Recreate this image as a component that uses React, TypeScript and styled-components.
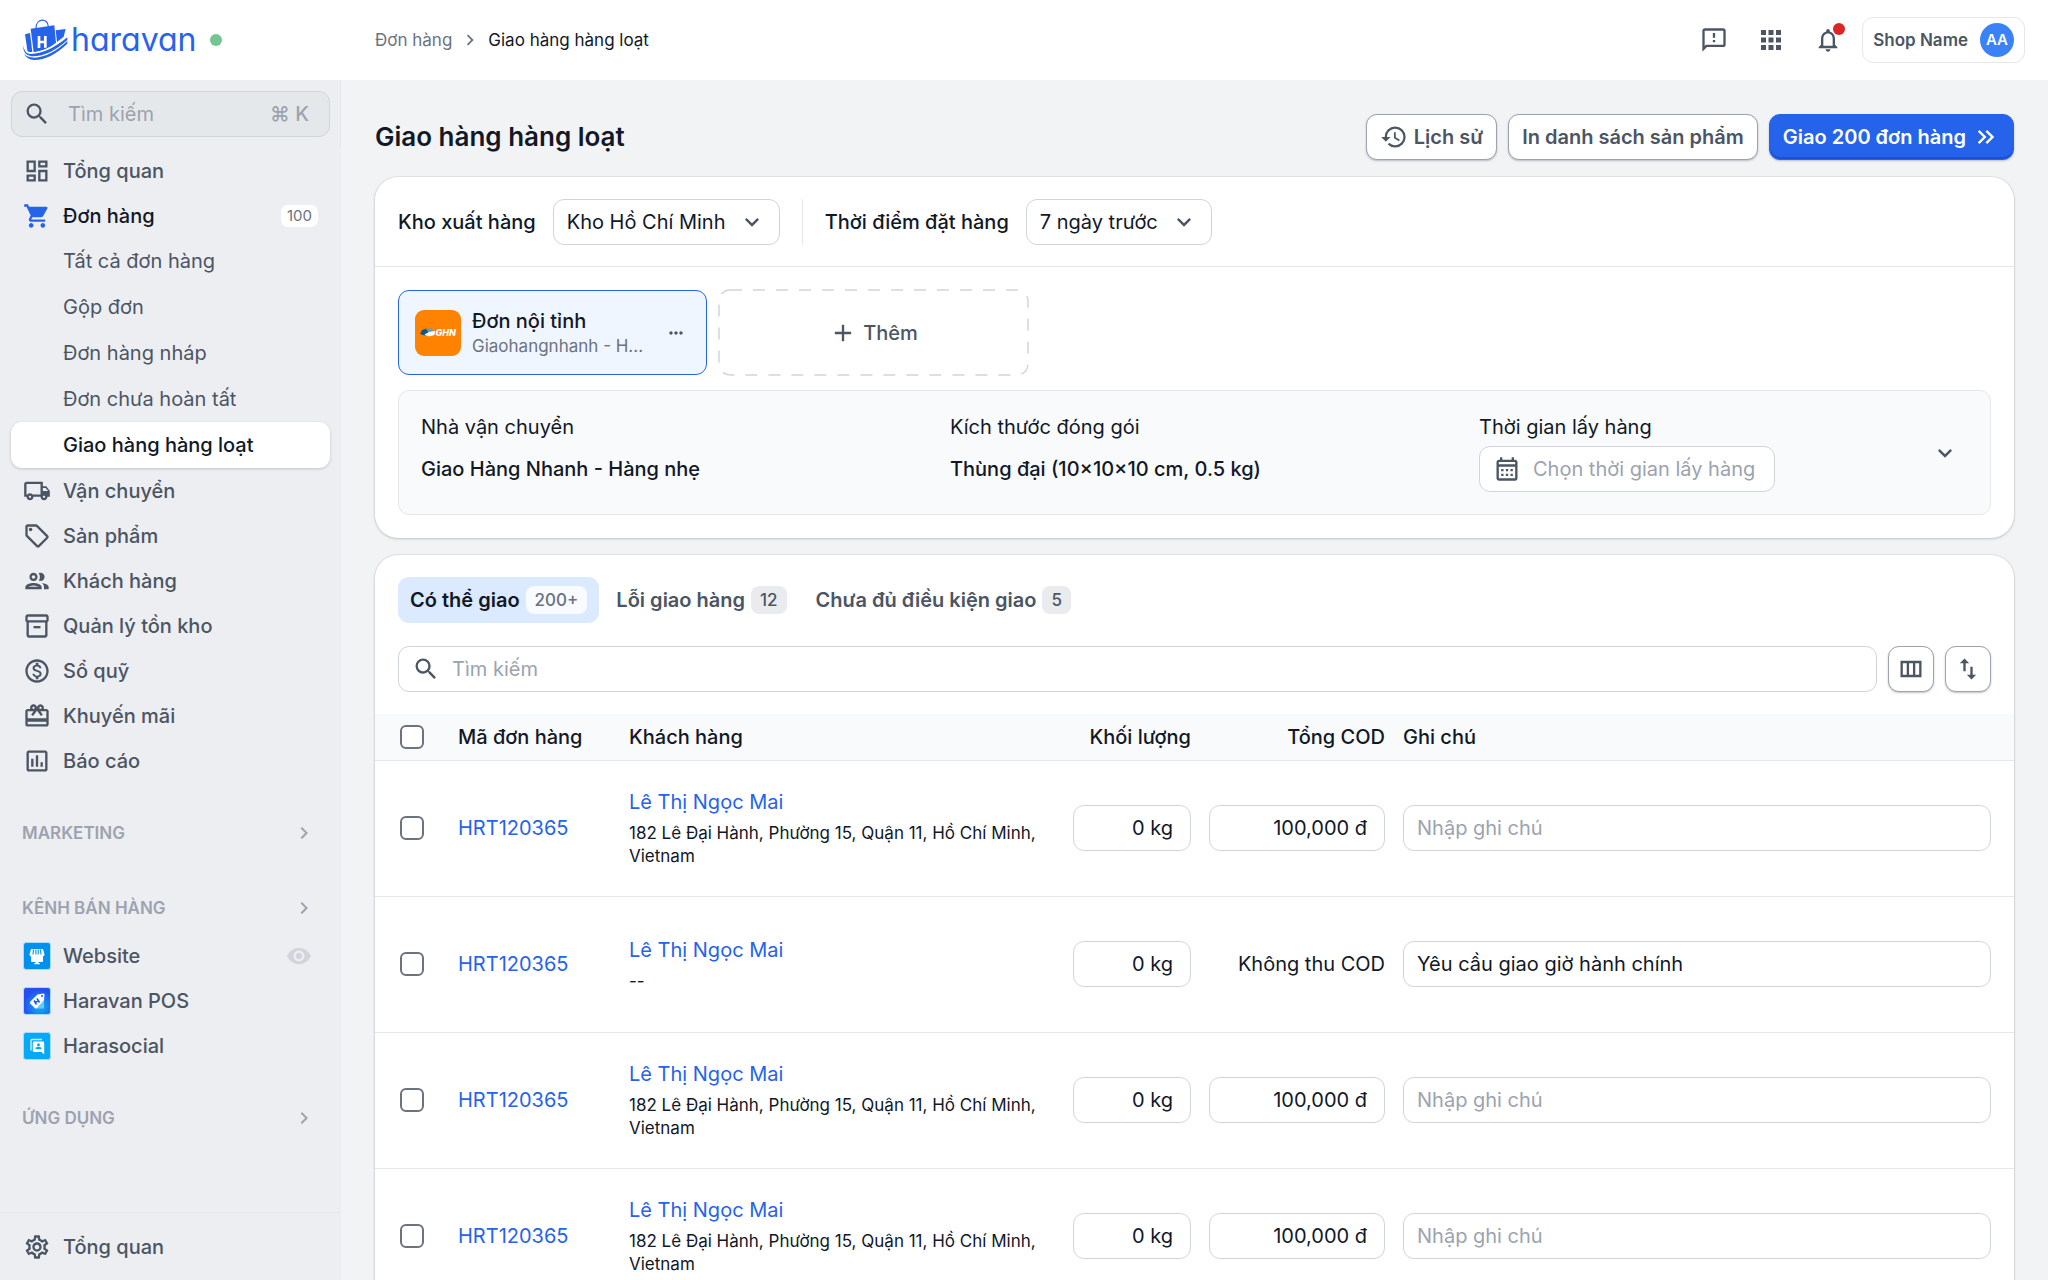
import React from 'react';
import styled, { createGlobalStyle } from 'styled-components';
import {
  MdAdd,
  MdApps,
  MdChevronRight,
  MdExpandMore,
  MdHistory,
  MdKeyboardDoubleArrowRight,
  MdMoreHoriz,
  MdNotificationsNone,
  MdOutlineAssessment,
  MdOutlineCalendarMonth,
  MdOutlineDashboard,
  MdOutlineFeedback,
  MdOutlineGroup,
  MdOutlineInventory2,
  MdOutlineLocalShipping,
  MdOutlineMonetizationOn,
  MdOutlineRedeem,
  MdOutlineSell,
  MdOutlineSettings,
  MdOutlineViewColumn,
  MdRemoveRedEye,
  MdSearch,
  MdShoppingCart,
  MdSwapVert,
} from 'react-icons/md';

const c = {
  ink: '#111827',
  text: '#4b5563',
  soft: '#6b7280',
  faint: '#9ca3af',
  line: '#e5e7eb',
  field: '#d1d5db',
  blue: '#2563eb',
};

const Global = createGlobalStyle`
  *, *::before, *::after { box-sizing: border-box; }
  body {
    margin: 0;
    background: #f2f3f5;
    color: ${c.ink};
    font-family: Inter, 'Noto Sans', sans-serif;
    font-size: 20px;
    line-height: 28px;
  }
  button, input, select { font: inherit; color: inherit; }
  button { cursor: pointer; }
  a { color: inherit; text-decoration: none; }
  svg { display: block; flex-shrink: 0; }
  h1, h2, p { margin: 0; }
  input::placeholder { color: ${c.faint}; opacity: 1; }
`;

/* ---------- frame ---------- */

const Shell = styled.div`
  display: grid;
  grid-template: auto minmax(0, 1fr) / 341px minmax(0, 1fr);
  height: 100vh;
`;

const Header = styled.header`
  grid-column: 1 / -1;
  display: grid;
  grid-template-columns: 375px 1fr auto;
  align-items: center;
  height: 80px;
  padding-right: 23px;
  background: #fff;
`;

const Brand = styled.a`
  display: flex;
  align-items: center;
  padding-left: 22px;
`;

const BrandName = styled.span`
  padding-left: 2px;
  color: ${c.blue};
  font-size: 32px;
  line-height: 40px;
  font-feature-settings: 'cv11';
`;

const Online = styled.span`
  width: 12px;
  height: 12px;
  margin-left: 14px;
  border-radius: 50%;
  background: #74c690;
`;

const Crumbs = styled.nav`
  display: flex;
  align-items: center;
  gap: 7px;
  color: ${c.soft};
  font-size: 17px;
  line-height: 24px;
`;

const CrumbCurrent = styled.span`
  color: ${c.ink};
`;

const HeaderTools = styled.div`
  display: flex;
  gap: 11px;
`;

const ToolButton = styled.button`
  position: relative;
  display: grid;
  place-items: center;
  width: 46px;
  height: 46px;
  padding: 0;
  border: 0;
  background: none;
  color: ${c.text};
`;

const Alert = styled.span`
  position: absolute;
  top: 6px;
  right: 6px;
  width: 12px;
  height: 12px;
  border-radius: 50%;
  background: #dc2626;
`;

const Account = styled.button`
  display: flex;
  align-items: center;
  gap: 12px;
  height: 46px;
  padding: 0 10px;
  border: 1px solid ${c.line};
  border-radius: 11px;
  background: #fff;
  color: ${c.text};
  font-size: 17px;
  font-weight: 600;
`;

const Avatar = styled.span`
  display: grid;
  place-items: center;
  width: 34px;
  height: 34px;
  border-radius: 50%;
  background: #3b82f6;
  color: #fff;
  font-size: 15px;
`;

/* ---------- sidebar ---------- */

const Sidebar = styled.aside`
  display: flex;
  flex-direction: column;
  min-height: 0;
  background: #edeef2;
`;

const SideSearch = styled.div`
  padding: 11px 10px 11px 11px;
  border-right: 1px solid ${c.line};
`;

const SideSearchButton = styled.button`
  display: flex;
  align-items: center;
  gap: 17px;
  width: 100%;
  height: 46px;
  padding: 0 20px 0 11px;
  border: 1px solid ${c.field};
  border-radius: 11px;
  background: #e5e8eb;
  color: ${c.faint};
  svg { color: ${c.text}; }
`;

const Shortcut = styled.kbd`
  margin-left: auto;
  font: inherit;
  font-weight: 500;
`;

const SideScroll = styled.nav`
  flex: 1;
  min-height: 0;
  overflow: hidden;
  padding: 0 11px;
`;

const SideList = styled.ul`
  margin: 0;
  padding: 0;
  list-style: none;
`;

const SideLink = styled.a<{ $active?: boolean }>`
  display: flex;
  align-items: center;
  gap: 12px;
  height: 45px;
  padding: 0 12px;
  color: ${(p) => (p.$active ? c.ink : c.text)};
  font-weight: 500;
  svg:first-child { color: ${(p) => (p.$active ? c.blue : 'inherit')}; }
`;

const SubLink = styled.a<{ $active?: boolean }>`
  display: flex;
  align-items: center;
  height: 46px;
  padding-left: 52px;
  border-radius: 11px;
  color: ${(p) => (p.$active ? c.ink : c.text)};
  font-weight: ${(p) => (p.$active ? 500 : 400)};
  background: ${(p) => (p.$active ? '#fff' : 'none')};
  box-shadow: ${(p) => (p.$active ? '0 1px 3px rgba(17, 24, 39, 0.2)' : 'none')};
`;

const Count = styled.span`
  margin-left: auto;
  padding: 0 6px;
  border-radius: 7px;
  background: #fff;
  color: ${c.soft};
  font-size: 15px;
  font-weight: 400;
  line-height: 22px;
`;

const Seen = styled(MdRemoveRedEye)`
  margin-left: auto;
  margin-right: 6px;
  color: ${c.field};
`;

const SideHeading = styled.button`
  display: flex;
  align-items: center;
  justify-content: space-between;
  width: 100%;
  height: 50px;
  margin-top: 25px;
  padding: 0 14px 0 11px;
  border: 0;
  background: none;
  color: ${c.faint};
  font-size: 17px;
  font-weight: 600;
`;

const SideFooter = styled.div`
  padding: 11px;
  border-top: 1px solid ${c.line};
`;

/* ---------- page ---------- */

const Main = styled.main`
  min-height: 0;
  overflow-y: auto;
  scrollbar-width: none;
  padding: 34px;
`;

const TitleRow = styled.div`
  display: flex;
  align-items: center;
  gap: 11px;
  margin-bottom: 17px;
`;

const Title = styled.h1`
  flex: 1;
  font-size: 26px;
  font-weight: 600;
  line-height: 34px;
`;

const Button = styled.button<{ $primary?: boolean }>`
  display: flex;
  align-items: center;
  gap: 6px;
  height: 46px;
  padding: 0 13px;
  border: 1px solid ${(p) => (p.$primary ? c.blue : c.faint)};
  border-radius: 11px;
  background: ${(p) => (p.$primary ? c.blue : '#fff')};
  color: ${(p) => (p.$primary ? '#fff' : c.text)};
  font-weight: 600;
  box-shadow: ${(p) => (p.$primary ? 'inset 0 -2px 0 #1d4ed8, ' : '')}0 1px 2px rgba(17, 24, 39, 0.25);
`;

const IconButton = styled(Button)`
  justify-content: center;
  width: 46px;
  padding: 0;
`;

const Card = styled.section`
  margin-bottom: 17px;
  border-radius: 23px;
  background: #fff;
  box-shadow: 0 0 0 1px rgba(17, 24, 39, 0.05), 0 1px 3px rgba(17, 24, 39, 0.18);
`;

const FilterRow = styled.div`
  display: flex;
  align-items: center;
  height: 90px;
  padding: 0 23px;
  border-bottom: 1px solid ${c.line};
`;

const FilterLabel = styled.label`
  margin-right: 17px;
  font-weight: 500;
`;

const FilterDivider = styled.span`
  width: 1px;
  height: 46px;
  margin: 0 22px;
  background: ${c.line};
`;

const SelectBox = styled.span`
  display: grid;
  align-items: center;
  svg {
    grid-area: 1 / 1;
    justify-self: end;
    margin-right: 14px;
    color: ${c.text};
    pointer-events: none;
  }
`;

const Select = styled.select`
  grid-area: 1 / 1;
  height: 46px;
  padding: 0 53px 0 13px;
  border: 1px solid ${c.field};
  border-radius: 11px;
  background: #fff;
  appearance: none;
`;

const CarrierArea = styled.div`
  display: grid;
  gap: 15px;
  padding: 23px;
`;

const CarrierTabs = styled.div`
  display: grid;
  grid-template-columns: 309px 309px;
  gap: 12px;
`;

const Carrier = styled.div`
  display: flex;
  align-items: center;
  height: 85px;
  padding: 0 7px 0 16px;
  border: 1px solid ${c.blue};
  border-radius: 11px;
  background: #eff6ff;
`;

const CarrierText = styled.div`
  flex: 1;
  min-width: 0;
  margin: 0 6px 0 11px;
`;

const CarrierName = styled.h2`
  font-size: 20px;
  font-weight: 500;
  line-height: 28px;
`;

const CarrierService = styled.p`
  color: ${c.soft};
  font-size: 17px;
  line-height: 23px;
  white-space: nowrap;
`;

const AddCarrier = styled.button`
  position: relative;
  display: flex;
  align-items: center;
  justify-content: center;
  gap: 6px;
  padding: 0;
  border: 0;
  background: none;
  color: ${c.text};
  font-weight: 500;
`;

const DashedEdge = styled.svg`
  position: absolute;
  inset: 0;
  width: 100%;
  height: 100%;
  overflow: visible;
`;

const Details = styled.div`
  display: grid;
  grid-template-columns: repeat(3, minmax(0, 1fr));
  gap: 40px;
  padding: 22px;
  border: 1px solid ${c.line};
  border-radius: 11px;
  background: #f9fafb;
`;

const Detail = styled.div`
  display: grid;
  grid-template-rows: 28px 46px;
  gap: 5px;
  align-items: center;
`;

const DetailLast = styled.div`
  display: flex;
  align-items: center;
  justify-content: space-between;
`;

const Strong = styled.strong`
  font-weight: 500;
`;

const Field = styled.div`
  display: flex;
  flex: 1;
  align-items: center;
  gap: 12px;
  height: 46px;
  padding: 0 13px;
  border: 1px solid ${c.field};
  border-radius: 11px;
  background: #fff;
  svg { color: ${c.text}; }
`;

const FieldInput = styled.input`
  flex: 1;
  min-width: 0;
  padding: 0;
  border: 0;
  background: none;
  outline: 0;
`;

const DateField = styled(Field)`
  width: 296px;
`;

/* ---------- orders ---------- */

const Tabs = styled.div`
  display: flex;
  gap: 5px;
  padding: 22px 23px 23px;
`;

const Tab = styled.button<{ $active?: boolean }>`
  display: flex;
  align-items: center;
  gap: 6px;
  height: 46px;
  padding: 0 12px;
  border: 0;
  border-radius: 11px;
  background: ${(p) => (p.$active ? '#dbeafe' : 'none')};
  color: ${(p) => (p.$active ? c.ink : c.text)};
  font-weight: 600;
`;

const TabCount = styled.span<{ $active?: boolean }>`
  padding: 0 9px;
  border-radius: 8px;
  background: ${(p) => (p.$active ? '#f8fbff' : '#e9ebee')};
  color: ${(p) => (p.$active ? c.soft : c.text)};
  font-size: 17px;
  font-weight: 500;
  line-height: 28px;
`;

const SearchRow = styled.div`
  display: flex;
  gap: 11px;
  padding: 0 23px 22px;
`;

const Table = styled.table`
  width: 100%;
  border-collapse: collapse;
  table-layout: fixed;
`;

const Col = styled.col<{ $w: string }>`
  width: ${(p) => p.$w};
`;

const Th = styled.th<{ $right?: boolean }>`
  height: 46px;
  padding: 0 9px;
  border-bottom: 1px solid ${c.line};
  background: #f9fafb;
  font-weight: 500;
  text-align: ${(p) => (p.$right ? 'right' : 'left')};
  &:first-child { padding-left: 25px; }
`;

const Td = styled.td<{ $right?: boolean }>`
  height: 136px;
  padding: 0 9px;
  border-bottom: 1px solid ${c.line};
  text-align: ${(p) => (p.$right ? 'right' : 'left')};
  &:first-child { padding-left: 25px; }
  &:last-child { padding-right: 23px; }
`;

const Check = styled.input`
  display: block;
  width: 24px;
  height: 24px;
  margin: 0;
  border: 2px solid ${c.soft};
  border-radius: 6px;
  background: #fff;
  appearance: none;
  &:checked { background: ${c.blue}; }
`;

const Link = styled.a`
  color: ${c.blue};
`;

const Customer = styled(Link)`
  display: block;
  margin-bottom: 6px;
`;

const Address = styled.p`
  font-size: 17px;
  line-height: 23px;
`;

const CellInput = styled.input<{ $right?: boolean }>`
  display: block;
  width: 100%;
  height: 46px;
  padding: 0 ${(p) => (p.$right ? 17 : 13)}px;
  border: 1px solid ${c.field};
  border-radius: 11px;
  background: #fff;
  text-align: ${(p) => (p.$right ? 'right' : 'left')};
`;

/* ---------- drawings ---------- */

const LogoMark = () => (
  <svg width="47" height="42" viewBox="35 27 141 126" aria-hidden="true">
    <path d="M77 54C77 24 113 22 114 50" fill="none" stroke="#2563eb" strokeWidth="3.5" />
    <path d="M44 73 59 69 66 126 52 127Z" fill="#2563eb" />
    <path d="M61 56 132 46 137 98Q106 124 70 127Z" fill="#2563eb" />
    <path d="M136 61 166 57 160 80 140 96Z" fill="#2563eb" />
    <path d="M82 78H90V92H101V78H109V113H101V100H90V114H82Z" fill="#fff" />
    <path d="M39 106Q42 133 62 132C94 131 130 116 171 82" fill="none" stroke="#fff" strokeWidth="11" />
    <path d="M39 106Q42 133 62 132C94 131 130 116 171 82L171 90C138 121 100 140 64 139Q37 136 39 106Z" fill="#2563eb" />
    <path d="M41 130Q49 143 72 143C105 141 138 125 171 93V101C140 131 105 150 72 150Q48 149 41 130Z" fill="#2563eb" />
  </svg>
);

const WebsiteIcon = () => (
  <svg width="28" height="28" viewBox="0 0 28 28" aria-hidden="true">
    <rect x=".5" y=".5" width="27" height="27" rx="2.5" fill="#0091ee" stroke="#a5dcfb" />
    <path d="M8 7h12l1.5 5.500a1.900 1.900 0 0 1-1.500 2V19a1 1 0 0 1-1 1h-3.500v1.200h1.500V22.300h-6v-1.100h1.500V20H9a1 1 0 0 1-1-1v-4.500a1.900 1.900 0 0 1-1.500-2Z" fill="#fff" />
    <path d="M10.500 7.500 10 12.500M12.900 7.500v5M15.200 7.500v5M17.500 7.500l.5 5" stroke="#0091ee" strokeWidth="1.100" />
  </svg>
);

const PosIcon = () => (
  <svg width="28" height="28" viewBox="0 0 28 28" aria-hidden="true">
    <defs>
      <radialGradient id="pos" cx=".6" cy=".7" r=".6">
        <stop offset="0" stopColor="#0fb4f2" />
        <stop offset="1" stopColor="#2450f0" />
      </radialGradient>
    </defs>
    <rect x=".5" y=".5" width="27" height="27" rx="2.500" fill="url(#pos)" stroke="#a5dcfb" />
    <path d="M21 21.500V12L14 21.500Z" fill="#5fd0f5" />
    <path d="M14.500 7.500 20.500 6.500Q21.500 6.500 21.500 7.500L21 13 14 21.200Q13 22 12 21.200L7.200 16.500Q6.500 15.500 7.200 14.700Z" fill="#fff" />
    <circle cx="19" cy="9" r="1" fill="#2450f0" />
    <path d="M11 13.500 13.500 17.500M14 11.500 16.500 15.500M12.200 15.500 15.300 13.500" stroke="#2450f0" strokeWidth="1.500" />
  </svg>
);

const SocialIcon = () => (
  <svg width="28" height="28" viewBox="0 0 28 28" aria-hidden="true">
    <rect x=".5" y=".5" width="27" height="27" rx="2.500" fill="#04a9f7" stroke="#a5dcfb" />
    <path d="M8 18.500V8.500Q8 7.500 9 7.500h10" fill="none" stroke="#d6f1fe" strokeWidth="1.400" />
    <path d="M11 9.500h9q1.200 0 1.200 1.200V22.500L18.500 20H11q-1.200 0-1.200-1.200v-8.100Q9.800 9.500 11 9.500Z" fill="#fff" />
    <circle cx="15.500" cy="12.800" r="1.500" fill="#04a9f7" />
    <path d="M12.500 17.200q0-2.400 3-2.400t3 2.400Z" fill="#04a9f7" />
  </svg>
);

const GhnIcon = () => (
  <svg width="46" height="46" viewBox="0 0 46 46" role="img" aria-label="GHN">
    <rect width="46" height="46" rx="9" fill="#ff8200" />
    <path d="M7 20 12 18.500 15 22 9.500 25.500 5 24Z" fill="#14567f" />
    <path d="M11 19 16 18.500 18.500 21 14 23Z" fill="#5aa0c4" />
    <path d="M9.500 24.500 14 22 20 21 19.500 25 14 26.500Z" fill="#fff" />
    <text x="20.500" y="26" fill="#fff" fontFamily="Inter, sans-serif" fontSize="9" fontWeight="800" fontStyle="italic">
      GHN
    </text>
  </svg>
);

/* ---------- data ---------- */

const orderPages = ['Tất cả đơn hàng', 'Gộp đơn', 'Đơn hàng nháp', 'Đơn chưa hoàn tất', 'Giao hàng hàng loạt'];

const menu = [
  { label: 'Vận chuyển', Icon: MdOutlineLocalShipping },
  { label: 'Sản phẩm', Icon: MdOutlineSell },
  { label: 'Khách hàng', Icon: MdOutlineGroup },
  { label: 'Quản lý tồn kho', Icon: MdOutlineInventory2 },
  { label: 'Sổ quỹ', Icon: MdOutlineMonetizationOn },
  { label: 'Khuyến mãi', Icon: MdOutlineRedeem },
  { label: 'Báo cáo', Icon: MdOutlineAssessment },
];

const tabs = [
  { label: 'Có thể giao', count: '200+' },
  { label: 'Lỗi giao hàng', count: '12' },
  { label: 'Chưa đủ điều kiện giao', count: '5' },
];

const address = '182 Lê Đại Hành, Phường 15, Quận 11, Hồ Chí Minh, Vietnam';
const orders = [
  { address, cod: '100,000 đ', note: '' },
  { address: '--', cod: null, note: 'Yêu cầu giao giờ hành chính' },
  { address, cod: '100,000 đ', note: '' },
  { address, cod: '100,000 đ', note: '' },
];

/* ---------- view ---------- */

const Heading = ({ children }: { children: string }) => (
  <SideHeading type="button">
    {children}
    <MdChevronRight size={24} />
  </SideHeading>
);

export default function App() {
  return (
    <Shell>
      <Global />
      <Header>
        <Brand href="#">
          <LogoMark />
          <BrandName>haravan</BrandName>
          <Online />
        </Brand>
        <Crumbs>
          <a href="#">Đơn hàng</a>
          <MdChevronRight size={22} />
          <CrumbCurrent>Giao hàng hàng loạt</CrumbCurrent>
        </Crumbs>
        <HeaderTools>
          <ToolButton type="button" aria-label="Góp ý">
            <MdOutlineFeedback size={28} />
          </ToolButton>
          <ToolButton type="button" aria-label="Ứng dụng">
            <MdApps size={30} />
          </ToolButton>
          <ToolButton type="button" aria-label="Thông báo">
            <MdNotificationsNone size={28} />
            <Alert />
          </ToolButton>
          <Account type="button">
            Shop Name
            <Avatar>AA</Avatar>
          </Account>
        </HeaderTools>
      </Header>

      <Sidebar>
        <SideSearch>
          <SideSearchButton type="button">
            <MdSearch size={28} />
            Tìm kiếm
            <Shortcut>⌘ K</Shortcut>
          </SideSearchButton>
        </SideSearch>
        <SideScroll>
          <SideList>
            <li>
              <SideLink href="#">
                <MdOutlineDashboard size={28} />
                Tổng quan
              </SideLink>
            </li>
            <li>
              <SideLink href="#" $active>
                <MdShoppingCart size={28} />
                Đơn hàng
                <Count>100</Count>
              </SideLink>
              <SideList>
                {orderPages.map((label) => (
                  <li key={label}>
                    <SubLink href="#" $active={label === 'Giao hàng hàng loạt'}>
                      {label}
                    </SubLink>
                  </li>
                ))}
              </SideList>
            </li>
            {menu.map(({ label, Icon }) => (
              <li key={label}>
                <SideLink href="#">
                  <Icon size={28} />
                  {label}
                </SideLink>
              </li>
            ))}
          </SideList>
          <Heading>MARKETING</Heading>
          <Heading>KÊNH BÁN HÀNG</Heading>
          <SideList>
            <li>
              <SideLink href="#">
                <WebsiteIcon />
                Website
                <Seen size={26} />
              </SideLink>
            </li>
            <li>
              <SideLink href="#">
                <PosIcon />
                Haravan POS
              </SideLink>
            </li>
            <li>
              <SideLink href="#">
                <SocialIcon />
                Harasocial
              </SideLink>
            </li>
          </SideList>
          <Heading>ỨNG DỤNG</Heading>
        </SideScroll>
        <SideFooter>
          <SideLink href="#">
            <MdOutlineSettings size={28} />
            Tổng quan
          </SideLink>
        </SideFooter>
      </Sidebar>

      <Main>
        <TitleRow>
          <Title>Giao hàng hàng loạt</Title>
          <Button type="button">
            <MdHistory size={28} />
            Lịch sử
          </Button>
          <Button type="button">In danh sách sản phẩm</Button>
          <Button type="button" $primary>
            Giao 200 đơn hàng
            <MdKeyboardDoubleArrowRight size={28} />
          </Button>
        </TitleRow>

        <Card>
          <FilterRow>
            <FilterLabel htmlFor="warehouse">Kho xuất hàng</FilterLabel>
            <SelectBox>
              <Select id="warehouse">
                <option>Kho Hồ Chí Minh</option>
              </Select>
              <MdExpandMore size={28} />
            </SelectBox>
            <FilterDivider />
            <FilterLabel htmlFor="period">Thời điểm đặt hàng</FilterLabel>
            <SelectBox>
              <Select id="period">
                <option>7 ngày trước</option>
              </Select>
              <MdExpandMore size={28} />
            </SelectBox>
          </FilterRow>
          <CarrierArea>
            <CarrierTabs>
              <Carrier>
                <GhnIcon />
                <CarrierText>
                  <CarrierName>Đơn nội tỉnh</CarrierName>
                  <CarrierService>Giaohangnhanh - H...</CarrierService>
                </CarrierText>
                <ToolButton type="button" aria-label="Tùy chọn">
                  <MdMoreHoriz size={20} />
                </ToolButton>
              </Carrier>
              <AddCarrier type="button">
                <DashedEdge aria-hidden="true">
                  <rect width="100%" height="100%" rx="11" fill="none" stroke="#d1d5db" strokeWidth="1.500" strokeDasharray="12 11" />
                </DashedEdge>
                <MdAdd size={28} />
                Thêm
              </AddCarrier>
            </CarrierTabs>
            <Details>
              <Detail>
                <span>Nhà vận chuyển</span>
                <Strong>Giao Hàng Nhanh - Hàng nhẹ</Strong>
              </Detail>
              <Detail>
                <span>Kích thước đóng gói</span>
                <Strong>Thùng đại (10×10×10 cm, 0.5 kg)</Strong>
              </Detail>
              <DetailLast>
                <Detail>
                  <label htmlFor="pickup">Thời gian lấy hàng</label>
                  <DateField>
                    <MdOutlineCalendarMonth size={28} />
                    <FieldInput id="pickup" placeholder="Chọn thời gian lấy hàng" />
                  </DateField>
                </Detail>
                <ToolButton type="button" aria-label="Mở rộng">
                  <MdExpandMore size={28} />
                </ToolButton>
              </DetailLast>
            </Details>
          </CarrierArea>
        </Card>

        <Card>
          <Tabs role="tablist">
            {tabs.map(({ label, count }, i) => (
              <Tab key={label} type="button" role="tab" aria-selected={i === 0} $active={i === 0}>
                {label}
                <TabCount $active={i === 0}>{count}</TabCount>
              </Tab>
            ))}
          </Tabs>
          <SearchRow>
            <Field>
              <MdSearch size={28} />
              <FieldInput type="search" aria-label="Tìm kiếm" placeholder="Tìm kiếm" />
            </Field>
            <IconButton type="button" aria-label="Cột hiển thị">
              <MdOutlineViewColumn size={28} />
            </IconButton>
            <IconButton type="button" aria-label="Sắp xếp">
              <MdSwapVert size={28} />
            </IconButton>
          </SearchRow>
          <Table>
            <colgroup>
              <Col $w="74px" />
              <Col $w="171px" />
              <Col $w="444px" />
              <Col $w="136px" />
              <Col $w="194px" />
              <Col $w="auto" />
            </colgroup>
            <thead>
              <tr>
                <Th>
                  <Check type="checkbox" aria-label="Chọn tất cả" />
                </Th>
                <Th>Mã đơn hàng</Th>
                <Th>Khách hàng</Th>
                <Th $right>Khối lượng</Th>
                <Th $right>Tổng COD</Th>
                <Th>Ghi chú</Th>
              </tr>
            </thead>
            <tbody>
              {orders.map((order, i) => (
                <tr key={i}>
                  <Td>
                    <Check type="checkbox" aria-label="Chọn đơn HRT120365" />
                  </Td>
                  <Td>
                    <Link href="#">HRT120365</Link>
                  </Td>
                  <Td>
                    <Customer href="#">Lê Thị Ngọc Mai</Customer>
                    <Address>{order.address}</Address>
                  </Td>
                  <Td>
                    <CellInput $right aria-label="Khối lượng" defaultValue="0 kg" />
                  </Td>
                  <Td $right>
                    {order.cod ? <CellInput $right aria-label="Tổng COD" defaultValue={order.cod} /> : 'Không thu COD'}
                  </Td>
                  <Td>
                    <CellInput aria-label="Ghi chú" placeholder="Nhập ghi chú" defaultValue={order.note} />
                  </Td>
                </tr>
              ))}
            </tbody>
          </Table>
        </Card>
      </Main>
    </Shell>
  );
}
